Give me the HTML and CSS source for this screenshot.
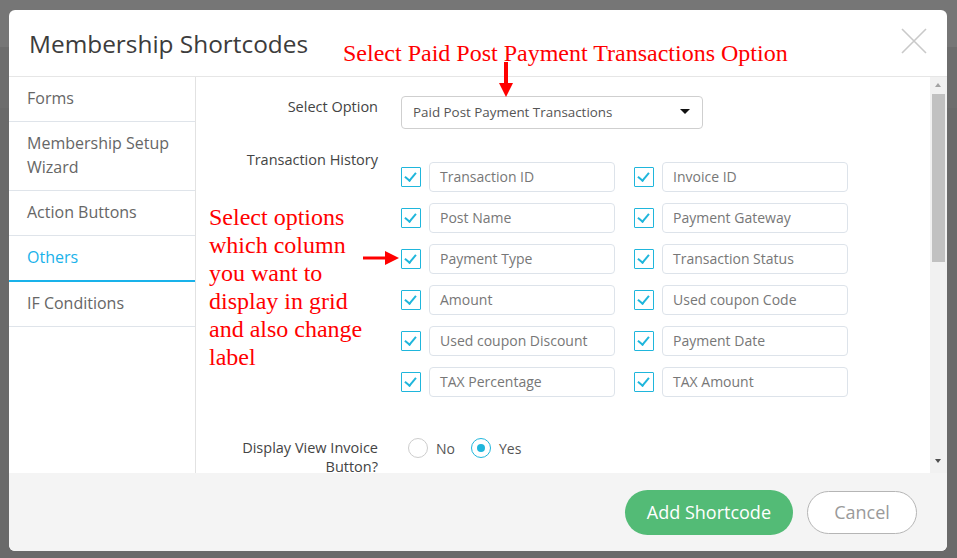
FILE: index.html
```html
<!DOCTYPE html>
<html lang="en">
<head>
  <meta charset="UTF-8">
  <title>Membership Shortcodes</title>
  <link rel="stylesheet" href="styles.css">
</head>
<body>

  <div class="modal">
    <div class="modal-header">
      <h2>Membership Shortcodes</h2>
      <span class="close">
        <svg width="26" height="26" viewBox="0 0 26 26"><path d="M1 1 L25 25 M25 1 L1 25" stroke="#c9c9c9" stroke-width="1.6" fill="none"/></svg>
      </span>
    </div>

    <div class="modal-body">
      <ul class="tabs">
        <li>Forms</li>
        <li>Membership Setup Wizard</li>
        <li>Action Buttons</li>
        <li class="active">Others</li>
        <li>IF Conditions</li>
      </ul>

      <div class="content">
        <div class="form-row first">
          <label>Select Option</label>
          <div class="select">
            <span>Paid Post Payment Transactions</span>
            <span class="caret"></span>
          </div>
        </div>

        <div class="form-row second">
          <label>Transaction History</label>
          <div class="check-grid">
            <div class="check-item"><span class="checkbox"></span><div class="text-input">Transaction ID</div></div>
            <div class="check-item"><span class="checkbox"></span><div class="text-input">Invoice ID</div></div>
            <div class="check-item"><span class="checkbox"></span><div class="text-input">Post Name</div></div>
            <div class="check-item"><span class="checkbox"></span><div class="text-input">Payment Gateway</div></div>
            <div class="check-item"><span class="checkbox"></span><div class="text-input">Payment Type</div></div>
            <div class="check-item"><span class="checkbox"></span><div class="text-input">Transaction Status</div></div>
            <div class="check-item"><span class="checkbox"></span><div class="text-input">Amount</div></div>
            <div class="check-item"><span class="checkbox"></span><div class="text-input">Used coupon Code</div></div>
            <div class="check-item"><span class="checkbox"></span><div class="text-input">Used coupon Discount</div></div>
            <div class="check-item"><span class="checkbox"></span><div class="text-input">Payment Date</div></div>
            <div class="check-item"><span class="checkbox"></span><div class="text-input">TAX Percentage</div></div>
            <div class="check-item"><span class="checkbox"></span><div class="text-input">TAX Amount</div></div>
          </div>
        </div>

        <div class="form-row third">
          <label class="two-line">Display View Invoice Button?</label>
          <div class="radios">
            <span class="radio"></span><span class="radio-text">No</span>
            <span class="radio checked"></span><span class="radio-text">Yes</span>
          </div>
        </div>
      </div>

      <div class="scrollbar">
        <span class="arrow up"></span>
        <span class="thumb"></span>
        <span class="arrow down"></span>
      </div>
    </div>

    <div class="modal-footer">
      <button class="btn-add">Add Shortcode</button>
      <button class="btn-cancel">Cancel</button>
    </div>

    <!-- red notes drawn on top of the screenshot -->
    <div class="note note-top">Select Paid Post Payment Transactions Option</div>
    <svg class="note-arrow-down" width="14" height="35" viewBox="0 0 14 35"><path d="M5 0 H9 V23 H5 Z" fill="#f00"/><path d="M0 21 H14 L7 35 Z" fill="#f00"/></svg>
    <div class="note note-left">Select options<br>which column<br>you want to<br>display in grid<br>and also change<br>label</div>
    <svg class="note-arrow-right" width="36" height="14" viewBox="0 0 36 14"><path d="M0 5.5 H23 V8.5 H0 Z" fill="#f00"/><path d="M22 0 V14 L36 7 Z" fill="#f00"/></svg>
  </div>

</body>
</html>
```

FILE: styles.css
```css
body {
  margin: 0;
  height: 558px;
  overflow: hidden;
  font-family: 'Open Sans', sans-serif;
  background: linear-gradient(#767676 0, #767676 47px, #6d6d6d 47px, #6d6d6d 108px, #6a6a6a 108px);
}

.modal {
  position: relative;
  margin: 10px 0 0 9px;
  width: 938px;
  height: 541px;
  background: #fff;
  border-radius: 6px;
  display: flex;
  flex-direction: column;
  overflow: hidden;
}

.modal-header {
  height: 66px;
  border-bottom: 1px solid #e6e6e6;
  display: flex;
  justify-content: space-between;
  align-items: center;
  padding: 0 20px;
  flex-shrink: 0;
}

.modal-header h2 {
  margin: 0;
  font-size: 24.4px;
  font-weight: 400;
  color: #3c3c3c;
}

.close {
  display: block;
  width: 26px;
  height: 26px;
  margin-top: -5px;
}

.modal-body {
  height: 396px;
  display: flex;
  overflow: hidden;
  flex-shrink: 0;
}

.tabs {
  list-style: none;
  margin: 0;
  padding: 0;
  width: 186px;
  border-right: 1px solid #e2e2e2;
  flex-shrink: 0;
}

.tabs li {
  padding: 9px 18px 11px;
  font-size: 16px;
  line-height: 24px;
  color: #666;
  border-bottom: 1px solid #dfe4ea;
}

.tabs li.active {
  color: #19b2ea;
  border-bottom: 2px solid #19b2ea;
}

.content {
  flex: 1;
  padding-top: 19px;
  overflow: hidden;
}

.form-row {
  display: grid;
  grid-template-columns: 182px 1fr;
  column-gap: 23px;
}

.form-row label {
  text-align: right;
  font-size: 14.5px;
  line-height: 20px;
  color: #444;
}

.form-row.first label {
  padding-top: 1px;
}

.form-row.second {
  margin-top: 21px;
}

.form-row.third {
  margin-top: 41px;
}

.form-row label.two-line {
  line-height: 19px;
  padding-top: 0;
}

.select {
  width: 302px;
  height: 33px;
  box-sizing: border-box;
  border: 1px solid #cfcfcf;
  border-radius: 4px;
  padding: 0 11px 2px;
  display: flex;
  align-items: center;
  justify-content: space-between;
  font-size: 13.4px;
  color: #555;
}

.caret {
  width: 0;
  height: 0;
  border-left: 5px solid transparent;
  border-right: 5px solid transparent;
  border-top: 5px solid #111;
  margin-right: 1px;
}

.check-grid {
  display: grid;
  grid-template-columns: repeat(2, 214px);
  column-gap: 19px;
  row-gap: 11px;
  margin-top: 12px;
}

.check-item {
  display: flex;
  align-items: center;
  gap: 8px;
}

.checkbox {
  position: relative;
  width: 20px;
  height: 20px;
  box-sizing: border-box;
  border: 1.5px solid #1fb6dc;
  border-radius: 1px;
  flex-shrink: 0;
}

.checkbox::after {
  content: "";
  position: absolute;
  left: 5px;
  top: 2px;
  width: 5px;
  height: 9px;
  border-right: 2px solid #1fb6dc;
  border-bottom: 2px solid #1fb6dc;
  transform: rotate(40deg);
}

.text-input {
  width: 186px;
  height: 30px;
  box-sizing: border-box;
  border: 1px solid #dde3ea;
  border-radius: 4px;
  padding: 0 10px;
  font-size: 14px;
  line-height: 28px;
  color: #777;
  white-space: nowrap;
}

.radios {
  display: flex;
  align-items: center;
  height: 20px;
  margin-left: 7px;
}

.radio {
  width: 20px;
  height: 20px;
  box-sizing: border-box;
  border: 1px solid #cdcdcd;
  border-radius: 50%;
  position: relative;
}

.radio.checked {
  border-color: #1fb6dc;
}

.radio.checked::after {
  content: "";
  position: absolute;
  left: 5px;
  top: 5px;
  width: 8px;
  height: 8px;
  border-radius: 50%;
  background: #1fb6dc;
}

.radio-text {
  font-size: 14px;
  color: #555;
  margin: 0 16px 0 8px;
}

.scrollbar {
  width: 17px;
  background: #f1f1f1;
  position: relative;
  flex-shrink: 0;
}

.thumb {
  position: absolute;
  left: 2px;
  right: 2px;
  top: 17px;
  height: 168px;
  background: #c1c1c1;
}

.arrow {
  position: absolute;
  left: 5px;
  width: 0;
  height: 0;
  border-left: 3.5px solid transparent;
  border-right: 3.5px solid transparent;
}

.arrow.up {
  top: 6px;
  border-bottom: 4px solid #a3a3a3;
}

.arrow.down {
  bottom: 10px;
  border-top: 4px solid #505050;
}

.modal-footer {
  flex: 1;
  background: #f4f4f4;
  display: flex;
  justify-content: flex-end;
  align-items: center;
  gap: 14px;
  padding-right: 30px;
}

.modal-footer button {
  font-family: 'Open Sans', sans-serif;
  font-size: 18px;
  cursor: pointer;
}

.btn-add {
  height: 45px;
  padding: 0 22px;
  border: none;
  border-radius: 23px;
  background: #53bb76;
  color: #fff;
}

.btn-cancel {
  height: 43px;
  width: 110px;
  border: 1px solid #b5b5b5;
  border-radius: 22px;
  background: #fff;
  color: #9a9a9a;
}

.note {
  position: absolute;
  font-family: 'Liberation Serif', serif;
  color: #f00;
  font-size: 24px;
}

.note-top {
  left: 334px;
  top: 29px;
  line-height: 28px;
  white-space: nowrap;
}

.note-left {
  left: 200px;
  top: 193px;
  line-height: 28px;
}

.note-arrow-down {
  position: absolute;
  left: 490px;
  top: 52px;
}

.note-arrow-right {
  position: absolute;
  left: 354px;
  top: 241px;
}
```
